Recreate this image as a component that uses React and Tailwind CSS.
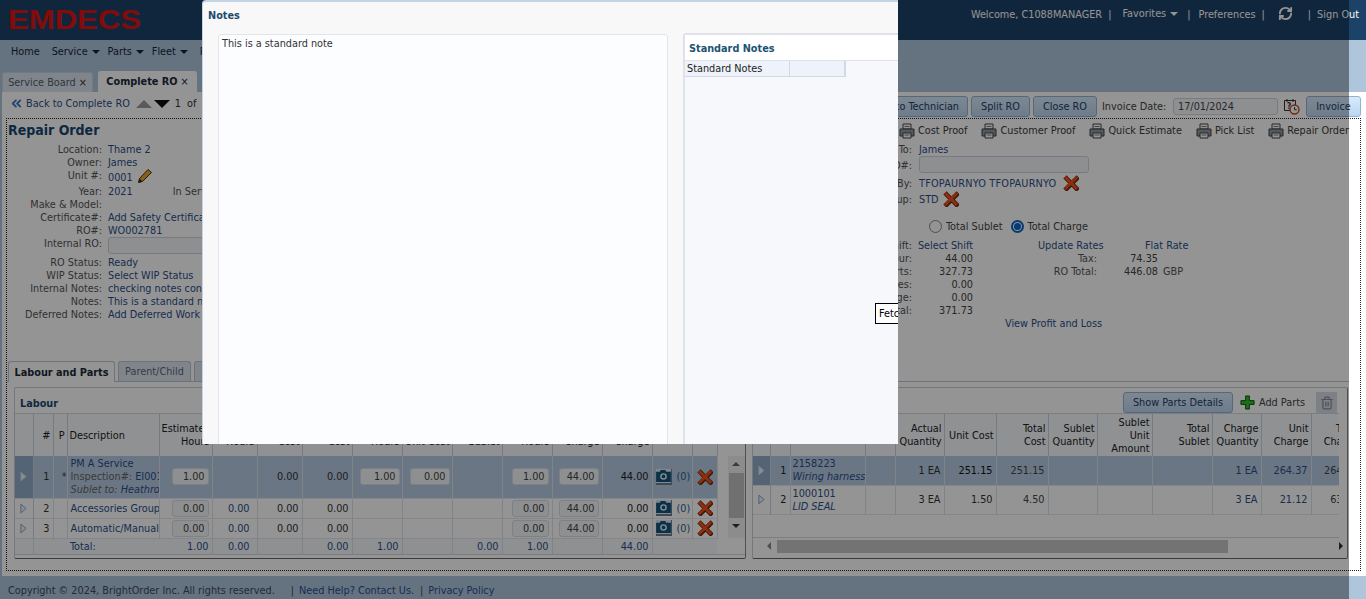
import React from 'react';
import { ChevronsLeft, Trash2, RefreshCw } from 'lucide-react';

const labourCols = [18, 20, 14, 92, 53, 45, 45, 50, 50, 50, 50, 50, 50, 50, 40, 25];
const partsCols = [17, 20, 75, 30, 49, 52, 52, 49, 55, 60, 49, 50, 50];

const labourHead = ['', '#', 'P', 'Description', 'Estimated Hours', 'Actual Hours', 'Unit Cost', 'Total Cost', 'Sublet Hours', 'Sublet Unit Cost', 'Total Sublet', 'Charge Hours', 'Unit Charge', 'Total Charge', '', ''];
const partsHead = ['', '#', 'Part #', '', 'Actual Quantity', 'Unit Cost', 'Total Cost', 'Sublet Quantity', 'Sublet Unit Amount', 'Total Sublet', 'Charge Quantity', 'Unit Charge', 'Total Charge'];

const leftRows = [
  ['Location:', 'Thame 2'],
  ['Owner:', 'James'],
  ['Unit #:', '0001'],
  ['Year:', '2021'],
  ['Make & Model:', ''],
  ['Certificate#:', 'Add Safety Certificate'],
  ['RO#:', 'WO002781'],
  ['Internal RO:', ''],
  ['RO Status:', 'Ready'],
  ['WIP Status:', 'Select WIP Status'],
  ['Internal Notes:', 'checking notes content'],
  ['Notes:', 'This is a standard note'],
  ['Deferred Notes:', 'Add Deferred Work'],
];

const totals = [
  ['Labour:', '44.00', 'Tax:', '74.35', ''],
  ['Parts:', '327.73', 'RO Total:', '446.08', 'GBP'],
  ['Fees:', '0.00', '', '', ''],
  ['Shop Charge:', '0.00', '', '', ''],
  ['Subtotal:', '371.73', '', '', ''],
];

const Caret = () => <span className="ml-1 inline-block h-0 w-0 border-x-[4px] border-t-[4px] border-x-transparent border-t-current align-middle" />;

const DeleteIcon = ({ className = 'h-[16px] w-[16px]' }) => (
  <svg viewBox="0 0 16 16" className={className}>
    <path d="M3 3l10 10M13 3L3 13" stroke="#6b2a14" strokeWidth="4.6" strokeLinecap="square" transform="translate(0.6 0.6)" />
    <path d="M3 3l10 10M13 3L3 13" stroke="#f0521a" strokeWidth="3" strokeLinecap="square" />
  </svg>
);

const Pencil = () => (
  <svg viewBox="0 0 16 16" className="h-[16px] w-[16px]">
    <path d="M1.5 14.5l1-4 8.5-9 3.5 3-9 9z" fill="#f0a030" stroke="#4a3010" strokeWidth="1" />
    <path d="M1.5 14.5l1-4 3 3z" fill="#2a2a2a" />
  </svg>
);

const CameraBtn = () => (
  <span className="inline-flex h-[16px] w-[16px] items-center justify-center border-b-2 border-r border-[#6f7f90] bg-[#dfe8f2]">
    <svg viewBox="0 0 16 13" className="h-[12px] w-[15px]">
      <path d="M0 2h4l1-2h5l1 2h5v11H0z" fill="#14557f" />
      <circle cx="8" cy="7" r="3.6" fill="#e6eef6" />
      <circle cx="8" cy="7" r="2" fill="#14557f" />
    </svg>
  </span>
);

const PrinterIcon = () => (
  <svg viewBox="0 0 16 16" className="h-[16px] w-[16px] shrink-0">
    <path d="M4 1h8v5H4z" fill="#fff" stroke="#444" />
    <path d="M1 6h14v7H1z" fill="#8d98a4" stroke="#444" />
    <path d="M4 10h8v5H4z" fill="#fff" stroke="#444" />
    <path d="M5.5 12h5M5.5 3.5h5" stroke="#777" />
  </svg>
);

const CalendarIcon = () => (
  <svg viewBox="0 0 17 17" className="ml-[2px] h-[17px] w-[17px] shrink-0">
    <path d="M1.5 2.5h11v10h-11z" fill="#fff" stroke="#333" />
    <path d="M4 1v3M10 1v3" stroke="#333" />
    <text x="4" y="11" fontSize="8" fontWeight="700" fill="#333" fontFamily="DejaVu Sans, sans-serif">?</text>
    <circle cx="11.5" cy="11.5" r="4.5" fill="#fff" stroke="#d0451c" strokeWidth="1.4" />
    <path d="M11.5 9v2.7h2.2" fill="none" stroke="#333" />
  </svg>
);

const PlusIcon = () => (
  <svg viewBox="0 0 16 16" className="mb-[3px] ml-[7px] h-[15px] w-[15px] shrink-0">
    <path d="M6 1h4v5h5v4h-5v5H6v-5H1V6h5z" fill="#2fc12f" stroke="#0c4a0c" />
  </svg>
);

const Cell = ({ value, wide }) => (
  <span className={`inline-block h-[17px] ${wide ? 'w-[40px]' : 'w-[37px]'} rounded-[3px] border border-[#d8dde3] bg-[#f5f7fa] pr-[3px] text-right leading-[15px] text-[#444]`}>{value}</span>
);

const Btn = ({ children, className = '' }) => (
  <button className={`h-[21px] rounded-[3px] border border-[#8fb3d6] bg-gradient-to-b from-[#d9eafb] to-[#bcd6f0] text-[#23406a] ${className}`}>{children}</button>
);

const PrintLink = ({ label, className = '' }) => (
  <span className={`flex items-center gap-[3px] text-[#3c3c3c] ${className}`}>
    <PrinterIcon />
    {label}
  </span>
);

const Head = ({ labels, cols }) => (
  <tr className="h-[42px] bg-[#f7fafd] text-[#222]">
    {cols.map((w, i) => (
      <th key={i} className={`overflow-hidden border-r border-[#cdd5de] px-[2px] font-normal ${i === 3 && labels[3] === 'Description' ? 'text-left' : 'text-right'} leading-[13px]`}>
        {labels[i]}
      </th>
    ))}
  </tr>
);

const Expander = ({ on }) => (
  <td className={`border-r border-[#cdd5de] text-center ${on ? 'bg-[#93acca]' : ''}`}>
    <svg viewBox="0 0 8 12" className="mx-auto h-[11px] w-[7px]">
      <path d="M1 1l6 5-6 5z" fill="#eef4fb" stroke={on ? '#c8d8ea' : '#7d9ac0'} />
    </svg>
  </td>
);

const Td = ({ children, className = '' }) => (
  <td className={`overflow-hidden whitespace-nowrap border-r border-[#dfe4e9] pr-[3px] text-right ${className}`}>{children}</td>
);

const LabourRow = ({ n, star, desc, est, act, cost, total, hours, subCost, chgHours, chgTotal, on, h }) => (
  <tr className={`${h} border-b border-[#e3e7ec] ${on ? 'bg-[#b7cbe3]' : 'bg-white'}`}>
    <Expander on={on} />
    <Td className="text-[#333]">{n}</Td>
    <Td className="!pr-0 text-center text-[#444]">{star}</Td>
    <Td className="!pl-[3px] !pr-0 !text-left text-[#2b4f8c]">{desc}</Td>
    <Td>{est}</Td>
    <Td className="!pr-[7px] text-[#2b4f8c]">{act}</Td>
    <Td className="text-[#333]">{cost}</Td>
    <Td className="text-[#333]">{total}</Td>
    <Td className="!pr-[2px]">{hours}</Td>
    <Td className="!pr-[2px]">{subCost}</Td>
    <Td></Td>
    <Td>{chgHours}</Td>
    <Td><Cell wide value="44.00" /></Td>
    <Td className="text-[#222]">{chgTotal}</Td>
    <td className="border-r border-[#dfe4e9] pl-[3px]">
      <span className="flex items-center gap-[5px] text-[#2f5f8a]"><CameraBtn />(0)</span>
    </td>
    <td className="border-r border-[#dfe4e9] text-center"><DeleteIcon className="mx-auto h-[16px] w-[16px]" /></td>
  </tr>
);

const PartsRow = ({ n, part, name, qty, unit, total, chg, unitChg, totalChg, on, unitDark }) => (
  <tr className={`h-[29px] border-b border-[#e3e7ec] ${on ? 'bg-[#b7cbe3]' : 'bg-white'}`}>
    <Expander on={on} />
    <Td className="text-[#222]">{n}</Td>
    <td className="overflow-hidden whitespace-nowrap border-r border-[#dfe4e9] pl-[2px] leading-[13px] text-[#2b4f8c]">
      {part}<br /><span className="italic">{name}</span>
    </td>
    <Td></Td>
    <Td className="text-[#333]">{qty}</Td>
    <Td className={unitDark ? 'text-[#111]' : 'text-[#333]'}>{unit}</Td>
    <Td className="text-[#444]">{total}</Td>
    <Td></Td>
    <Td></Td>
    <Td></Td>
    <Td className="text-[#2b4f8c]">{chg}</Td>
    <Td className="text-[#2b4f8c]">{unitChg}</Td>
    <Td className="border-r-0 text-[#444]">{totalChg}</Td>
  </tr>
);

export default function App() {
  return (
    <div className="relative flex h-[599px] w-[1366px] flex-col overflow-hidden bg-[#aec5dc] text-[10.8px] leading-[13px] [font-family:'DejaVu_Sans',sans-serif] [font-stretch:condensed]">
      {/* top bar */}
      <header className="flex h-10 shrink-0 items-start justify-between bg-[#1d4268] pl-[8px] text-white">
        <svg viewBox="0 0 134 21" className="mt-[9px] h-[21px] w-[134px]">
          <text x="0" y="20" fontSize="27" fontWeight="700" fill="#e01414" textLength="133" lengthAdjust="spacingAndGlyphs" fontFamily="Liberation Sans, sans-serif">EMDECS</text>
        </svg>
        <div className="mr-[7px] mt-[8px] flex items-center leading-[14px]">
          <span>Welcome, C1088MANAGER</span>
          <span className="ml-[6px]">|</span>
          <span className="ml-[11px] -mt-[2px]">Favorites<Caret /></span>
          <span className="ml-[9px]">|</span>
          <span className="ml-[8px]">Preferences</span>
          <span className="ml-[6px]">|</span>
          <RefreshCw size={15} strokeWidth={3} className="ml-[13px] -mt-[3px]" />
          <span className="ml-[15px]">|</span>
          <span className="ml-[6px]">Sign Out</span>
        </div>
      </header>

      {/* menu */}
      <nav className="flex h-[28px] shrink-0 items-center gap-[12px] pb-[6px] pl-[11px] text-[#142536]">
        <span>Home</span>
        <span>Service<Caret /></span>
        <span className="-ml-[4px]">Parts<Caret /></span>
        <span className="-ml-[4px]">Fleet<Caret /></span>
        <span>Reports<Caret /></span>
      </nav>

      {/* open tabs */}
      <div className="flex h-[24px] shrink-0 items-end gap-[5px] pl-[2px]">
        <div className="flex h-[20px] w-[91px] items-center justify-center gap-[3px] rounded-t-[3px] border border-b-0 border-[#c3d3e2] bg-[#dbe6f0] pb-[1px] text-[#55606b]">Service Board <span className="text-[#333]">×</span></div>
        <div className="flex h-[21px] w-[99px] items-center justify-center gap-[3px] rounded-t-[3px] bg-white font-bold text-[#1a2a3a]">Complete RO <span className="font-normal">×</span></div>
      </div>

      <main className="ml-[2px] flex min-h-0 flex-1 flex-col bg-white pb-[5px]">
        {/* action bar */}
        <div className="flex h-[26px] shrink-0 items-center justify-between pr-[5px] pt-[3px]">
          <div className="mb-[6px] flex items-center pl-[7px] text-[#2b4f8c]">
            <ChevronsLeft size={15} strokeWidth={3} className="text-[#3f78c8]" />
            <span className="ml-[2px]">Back to Complete RO</span>
            <span className="ml-[6px] h-0 w-0 border-x-[8px] border-b-[8px] border-x-transparent border-b-[#999]" />
            <span className="ml-[2px] h-0 w-0 border-x-[8px] border-t-[8px] border-x-transparent border-t-[#111]" />
            <span className="ml-[5px] text-[#333] [word-spacing:3px]">1 of 1</span>
          </div>
          <div className="flex items-center gap-[3px]">
            <Btn className="w-[130px] pr-[8px] text-right">Assign to Technician</Btn>
            <Btn className="w-[59px]">Split RO</Btn>
            <Btn className="w-[64px]">Close RO</Btn>
            <span className="ml-[2px] w-[64px] whitespace-nowrap text-[#444]">Invoice Date:</span>
            <span className="ml-[4px] h-[17px] w-[105px] rounded-[3px] border border-[#ccd5de] bg-[#f5f7fa] pl-[4px] leading-[16px] text-[#444]">17/01/2024</span>
            <CalendarIcon />
            <Btn className="ml-[3px] w-[55px]">Invoice</Btn>
          </div>
        </div>

        {/* dotted frame */}
        <div className="ml-[4px] mr-[5px] flex min-h-0 flex-1 flex-col border border-dotted border-[#222]">
          <div className="flex h-[242px] shrink-0">
            <section className="w-[745px] shrink-0 pl-[1px]">
              <h1 className="pt-[1px] text-[14px] font-bold leading-[20px] text-[#17466e]">Repair Order</h1>
              <div className="mt-[3px]">
                {leftRows.map(([label, value]) => (
                  <div key={label} className={`flex ${label === 'Unit #:' ? 'h-[16px]' : label === 'Internal RO:' ? 'h-[19px]' : 'h-[13px]'}`}>
                    <span className="w-[94px] shrink-0 text-right text-[#555]">{label}</span>
                    <span className="ml-[6px] flex items-start text-[#2b4f8c]">
                      {label === 'Internal RO:' ? (
                        <span className="h-[17px] w-[180px] rounded-[3px] border border-[#ccd5de] bg-[#f5f7fa]" />
                      ) : (
                        <span className={label === 'Unit #:' ? 'mt-[2px]' : ''}>{value}</span>
                      )}
                      {label === 'Unit #:' && <span className="ml-[4px] -mt-[1px]"><Pencil /></span>}
                      {label === 'Year:' && <span className="ml-[40px] text-[#555]">In Service:</span>}
                    </span>
                  </div>
                ))}
              </div>
            </section>

            <section className="min-w-0 flex-1">
              <div className="flex h-[23px] items-center justify-end gap-[14px]">
                <PrintLink label="Cost Proof" />
                <PrintLink label="Customer Proof" />
                <PrintLink label="Quick Estimate" />
                <PrintLink label="Pick List" />
                <PrintLink label="Repair Order" className="mr-[11px]" />
              </div>
              <div className="mt-[1px] flex h-[13px]"><span className="w-[160px] text-right text-[#555]">Assigned To:</span><span className="ml-[7px] text-[#2b4f8c]">James</span></div>
              <div className="flex h-[19px] items-start"><span className="w-[160px] pt-[3px] text-right text-[#555]">PO#:</span><span className="ml-[7px] h-[17px] w-[170px] rounded-[3px] border border-[#ccd5de] bg-[#f5f7fa]" /></div>
              <div className="flex h-[16px] items-center"><span className="w-[160px] text-right text-[#555]">Approved By:</span><span className="ml-[7px] w-[138px] whitespace-nowrap text-[#2b4f8c] tracking-[0.2px]">TFOPAURNYO TFOPAURNYO</span><DeleteIcon className="ml-[6px] h-[16px] w-[16px]" /></div>
              <div className="flex h-[16px] items-center"><span className="w-[160px] text-right text-[#555]">Markup:</span><span className="ml-[7px] text-[#2b4f8c]">STD</span><DeleteIcon className="ml-[4px] h-[16px] w-[16px]" /></div>
              <div className="mt-[11px] flex h-[16px] items-center pl-[177px] text-[#444]">
                <span className="h-[13px] w-[13px] rounded-full border border-[#888] bg-white" />
                <span className="ml-[4px]">Total Sublet</span>
                <span className="ml-[8px] flex h-[13px] w-[13px] items-center justify-center rounded-full border-2 border-[#0a64c8] bg-white"><span className="h-[7px] w-[7px] rounded-full bg-[#0a64c8]" /></span>
                <span className="ml-[4px]">Total Charge</span>
              </div>
              <div className="mt-[5px] flex h-[13px]">
                <span className="w-[160px] text-right text-[#555]">Shift:</span>
                <span className="w-[61px] whitespace-nowrap text-right text-[#2b4f8c]">Select Shift</span>
                <span className="ml-[65px] w-[66px] whitespace-nowrap text-[#2b4f8c]">Update Rates</span>
                <span className="ml-[41px] whitespace-nowrap text-[#2b4f8c]">Flat Rate</span>
              </div>
              {totals.map(([label, value, label2, value2, unit]) => (
                <div key={label} className="flex h-[13px]">
                  <span className="w-[160px] text-right text-[#555]">{label}</span>
                  <span className="w-[61px] text-right text-[#444]">{value}</span>
                  <span className="ml-[64px] w-[60px] text-right text-[#555]">{label2}</span>
                  <span className="w-[61px] text-right text-[#444]">{value2}</span>
                  <span className="ml-[5px] text-[#555]">{unit}</span>
                </div>
              ))}
              <div className="pl-[253px] text-[#2b4f8c]">View Profit and Loss</div>
            </section>
          </div>

          {/* sub tabs */}
          <div className="flex h-[21px] w-[1342px] shrink-0 items-end gap-[3px] border-b border-[#bcc6d0] pl-[1px]">
            <div className="flex h-[21px] w-[107px] translate-y-px items-center justify-center rounded-t-[3px] border border-b-0 border-[#bcc6d0] bg-white font-bold text-[#1a2a3a]">Labour and Parts</div>
            <div className="flex h-[20px] w-[73px] items-center justify-center rounded-t-[3px] border border-b-0 border-[#bcc6d0] bg-[#dbe6f0] text-[#667]">Parent/Child</div>
            <div className="flex h-[20px] w-[73px] items-center justify-center rounded-t-[3px] border border-b-0 border-[#bcc6d0] bg-[#dbe6f0] text-[#667]">History</div>
          </div>

          <div className="mt-[5px] flex w-[1342px] gap-[6px] pl-[7px]">
            {/* labour grid */}
            <section className="h-[172px] w-[732px] shrink-0 rounded-[2px] border border-[#c9ced4] border-b-[#666] border-r-[#888] bg-white">
              <h2 className="h-[25px] pl-[5px] pt-[9px] font-bold leading-[13px] text-[#1b4a72]">Labour</h2>
              <div className="flex border-y border-[#d3d9e0]">
                <table className="w-[702px] table-fixed border-collapse">
                  <colgroup>{labourCols.map((w, i) => <col key={i} style={{ width: w }} />)}</colgroup>
                  <thead><Head labels={labourHead} cols={labourCols} /></thead>
                  <tbody>
                    <LabourRow on h="h-[42px]" n="1" star="*" est={<Cell value="1.00" />} cost="0.00" total="0.00" hours={<Cell wide value="1.00" />} subCost={<Cell wide value="0.00" />} chgHours={<Cell value="1.00" />} chgTotal="44.00"
                      desc={<span className="block leading-[13px]">PM A Service<br /><span className="text-[#666]">Inspection#:</span> EI0012<br /><span className="italic"><span className="text-[#666]">Sublet to:</span> Heathrow</span></span>} />
                    <LabourRow h="h-[20px]" n="2" desc="Accessories Group" est={<Cell value="0.00" />} act="0.00" cost="0.00" total="0.00" chgHours={<Cell value="0.00" />} chgTotal="0.00" />
                    <LabourRow h="h-[20px]" n="3" desc="Automatic/Manual" est={<Cell value="0.00" />} act="0.00" cost="0.00" total="0.00" chgHours={<Cell value="0.00" />} chgTotal="0.00" />
                    <tr className="h-[16px] bg-[#f5f8fc] text-[#2b4f8c]">
                      <td className="border-r border-[#dfe4e9]" />
                      <td colSpan={2} />
                      <td className="pl-[3px]">Total:</td>
                      <Td className="border-0">1.00</Td>
                      <Td className="border-0 !pr-[7px]">0.00</Td>
                      <Td className="border-0"></Td>
                      <Td className="border-0">0.00</Td>
                      <Td className="border-0">1.00</Td>
                      <Td className="border-0"></Td>
                      <Td className="border-0">0.00</Td>
                      <Td className="border-0">1.00</Td>
                      <Td className="border-0"></Td>
                      <Td className="border-0">44.00</Td>
                      <td /><td />
                    </tr>
                  </tbody>
                </table>
                <div className="ml-[10px] flex w-[18px] flex-col">
                  <div className="h-[42px]" />
                  <div className="flex h-[82px] flex-col items-center bg-[#f1f1f1]">
                    <span className="mt-[6px] h-0 w-0 border-x-[4px] border-b-[4px] border-x-transparent border-b-[#666]" />
                    <span className="mt-[7px] h-[45px] w-[15px] bg-[#c1c1c1]" />
                    <span className="mt-[6px] h-0 w-0 border-x-[4px] border-t-[4px] border-x-transparent border-t-[#333]" />
                  </div>
                </div>
              </div>
            </section>

            {/* parts grid */}
            <section className="h-[172px] min-w-0 w-[596px] rounded-[2px] border border-[#c9ced4] border-b-[#666] border-r-[#888] bg-white">
              <div className="flex h-[25px] items-end pl-[7px] pr-[10px]">
                <h2 className="mb-[5px] font-bold text-[#1b4a72]">Parts</h2>
                <Btn className="ml-auto w-[110px]">Show Parts Details</Btn>
                <PlusIcon />
                <span className="mb-[4px] ml-[4px] w-[46px] whitespace-nowrap text-[#444]">Add Parts</span>
                <span className="ml-[11px] flex h-[21px] w-[21px] items-center justify-center bg-[#d8dde3]"><Trash2 size={14} className="text-[#889]" /></span>
              </div>
              <div className="border-y border-[#d3d9e0] w-[586px] overflow-hidden">
                <table className="w-[608px] table-fixed border-collapse">
                  <colgroup>{partsCols.map((w, i) => <col key={i} style={{ width: w }} />)}</colgroup>
                  <thead><Head labels={partsHead} cols={partsCols} /></thead>
                  <tbody>
                    <PartsRow on unitDark n="1" part="2158223" name="Wiring harness" qty="1 EA" unit="251.15" total="251.15" chg="1 EA" unitChg="264.37" totalChg="264.37" />
                    <PartsRow n="2" part="1000101" name="LID SEAL" qty="3 EA" unit="1.50" total="4.50" chg="3 EA" unitChg="21.12" totalChg="63.36" />
                  </tbody>
                </table>
                <div className="h-[22px] bg-white" />
              </div>
              <div className="flex h-[17px] items-center pl-[14px] pr-[4px]">
                <span className="h-0 w-0 border-y-[4px] border-r-[4px] border-y-transparent border-r-[#888]" />
                <span className="ml-[6px] h-[13px] w-[451px] bg-[#c6c6c6]" />
                <span className="ml-auto h-0 w-0 border-y-[4px] border-l-[4px] border-y-transparent border-l-[#333]" />
              </div>
            </section>
          </div>
        </div>
      </main>

      <footer className="flex h-[23px] shrink-0 items-center pl-[8px] pt-[5px] text-[#3b4a5a]">
        <span>Copyright © 2024, BrightOrder Inc. All rights reserved.</span>
        <span className="ml-[16px]">|</span>
        <span className="ml-[5px] text-[#2b4f8c]">Need Help? Contact Us.</span>
        <span className="ml-[6px]">|</span>
        <span className="ml-[5px] text-[#2b4f8c]">Privacy Policy</span>
      </footer>

      {/* page mask, stops short of the window edge */}
      <div className="absolute left-0 top-0 h-full w-[1349px] bg-black/[0.42]" />

      {/* notes dialog */}
      <div className="absolute left-[202px] top-0 flex h-[444px] w-[696px] flex-col overflow-hidden rounded-tl-[4px] border-l border-t-2 border-[#c4d3e6] bg-[#f8f8f8]">
        <div className="flex h-[32px] shrink-0 items-center pb-[5px] pl-[5px] font-bold text-[#1c4c6e]">Notes</div>
        <div className="flex min-h-0 flex-1 pl-[15px]">
          <div className="h-[420px] w-[450px] shrink-0 rounded-[3px] border border-[#e2e5e9] bg-[#fbfdff] pl-[3px] pt-[2px] leading-[14px] text-[#333]">This is a standard note</div>
          <div className="-mt-[1px] ml-[15px] h-[420px] min-w-0 flex-1 rounded-tl-[3px] border-l-2 border-t-2 border-[#dfe3e9] bg-[#f6f8fc]">
            <div className="flex h-[26px] items-center border-b border-[#dfe3e9] bg-white pl-[4px] pt-[2px] font-bold text-[#1b5374]">Standard Notes</div>
            <div className="flex h-[16px] w-[161px] items-center border-b border-r-2 border-[#d3d9e2] bg-[#eef2fa] text-[#222]">
              <span className="w-[105px] border-r border-[#d3d9e2] pl-[2px] leading-[15px]">Standard Notes</span>
            </div>
          </div>
        </div>
        {/* loading tooltip, cut by the dialog edge */}
        <div className="absolute left-[672px] top-[301px] flex h-[21px] w-[70px] items-center border border-black bg-white pl-[3px] text-black">Fetching...</div>
      </div>
    </div>
  );
}
